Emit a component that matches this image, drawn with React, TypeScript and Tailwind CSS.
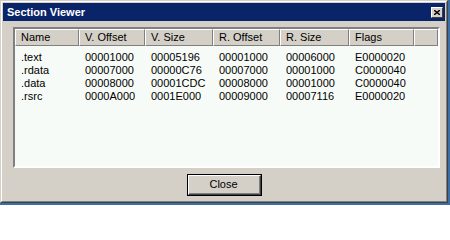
import { useState } from "react";

type Section = {
    name: string;
    vOffset: string;
    vSize: string;
    rOffset: string;
    rSize: string;
    flags: string;
};

const sections: Section[] = [
    { name: ".text", vOffset: "00001000", vSize: "00005196", rOffset: "00001000", rSize: "00006000", flags: "E0000020" },
    { name: ".rdata", vOffset: "00007000", vSize: "00000C76", rOffset: "00007000", rSize: "00001000", flags: "C0000040" },
    { name: ".data", vOffset: "00008000", vSize: "00001CDC", rOffset: "00008000", rSize: "00001000", flags: "C0000040" },
    { name: ".rsrc", vOffset: "0000A000", vSize: "0001E000", rOffset: "00009000", rSize: "00007116", flags: "E0000020" },
];

const columns = [
    { label: "Name", key: "name", width: "w-[64px]" },
    { label: "V. Offset", key: "vOffset", width: "w-[66px]" },
    { label: "V. Size", key: "vSize", width: "w-[68px]" },
    { label: "R. Offset", key: "rOffset", width: "w-[67px]" },
    { label: "R. Size", key: "rSize", width: "w-[69px]" },
    { label: "Flags", key: "flags", width: "w-[65px]" },
] as const;

function HeaderCell({ label, width }: { label: string; width: string }) {
    return (
        <div
            className={`${width} shrink-0 h-full flex items-center pl-[5px] border border-t-white border-l-white border-r-[#808080] border-b-[#808080]`}
        >
            {label}
        </div>
    );
}

export default function App() {
    const [selected, setSelected] = useState<number | null>(null);

    return (
        <div className="w-[450px] h-[205px] overflow-hidden bg-[#3a6ea5] font-['Liberation_Sans',Arial,sans-serif] text-[11px] text-black">
            <div className="w-[448px] h-[203px] bg-[#d4d0c8] border border-t-[#d4d0c8] border-l-[#d4d0c8] border-r-[#404040] border-b-[#404040] flex flex-col">
                <div className="flex-1 flex flex-col p-px border border-t-white border-l-white border-r-[#808080] border-b-[#808080]">
                    {/* title bar */}
                    <div className="h-[18px] shrink-0 bg-[#0a246a] flex items-center justify-between pl-[4px] pr-[2px]">
                        <span className="text-white font-bold text-[11px] leading-none">
                            Section Viewer
                        </span>
                        <button className="w-[12px] h-[11px] bg-[#d4d0c8] flex items-center justify-center border border-t-white border-l-white border-r-[#404040] border-b-[#404040]">
                            <svg width="6" height="5" viewBox="0 0 6 5">
                                <path d="M0 0 L6 5 M6 0 L0 5" stroke="#000" strokeWidth="1.4" />
                            </svg>
                        </button>
                    </div>

                    {/* body */}
                    <div className="flex-1 flex flex-col pl-[10px] pr-[5px] pt-[6px] pb-[4px]">
                        <div className="h-[141px] bg-[#f7fbf7] border-2 border-t-[#808080] border-l-[#808080] border-r-white border-b-white flex flex-col">
                            <div className="h-[17px] flex bg-[#d4d0c8] shrink-0">
                                {columns.map((c) => (
                                    <HeaderCell key={c.key} label={c.label} width={c.width} />
                                ))}
                                <div className="flex-1 h-full border border-t-white border-l-white border-r-[#808080] border-b-[#808080]" />
                            </div>
                            <div className="flex flex-col pt-[5px]">
                                {sections.map((s, i) => (
                                    <div
                                        key={s.name}
                                        onClick={() => setSelected(i)}
                                        className={`h-[13px] flex items-center ${selected === i ? "bg-[#0a246a] text-white" : ""}`}
                                    >
                                        {columns.map((c) => (
                                            <div key={c.key} className={`${c.width} shrink-0 pl-[6px] leading-none`}>
                                                {s[c.key]}
                                            </div>
                                        ))}
                                    </div>
                                ))}
                            </div>
                        </div>

                        <div className="flex justify-center mt-[6px] pr-[5px]">
                            <button className="w-[75px] h-[22px] border border-black bg-[#d4d0c8]">
                                <div className="w-full h-full flex items-center justify-center border border-t-white border-l-white border-r-[#404040] border-b-[#404040]">
                                    <div className="w-full h-full flex items-center justify-center border-r border-b border-[#808080]">
                                        Close
                                    </div>
                                </div>
                            </button>
                        </div>
                    </div>
                </div>
            </div>
        </div>
    );
}
